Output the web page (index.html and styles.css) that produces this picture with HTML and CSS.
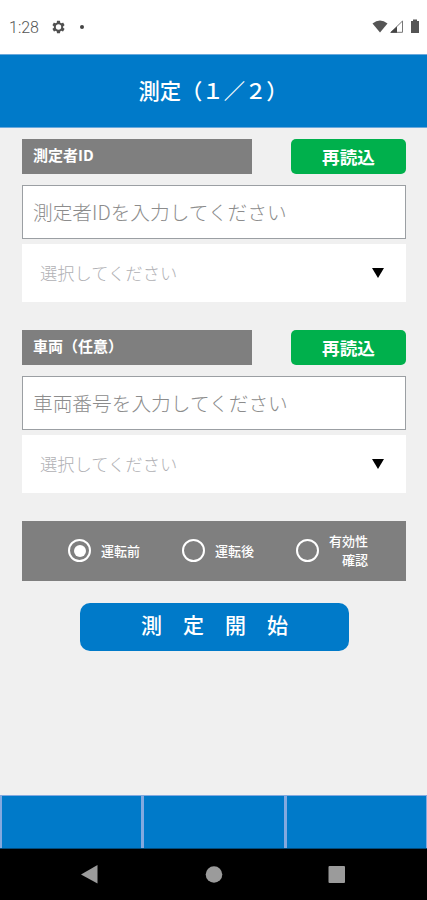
FILE: index.html
```
<!DOCTYPE html>
<html lang="ja">
<head>
<meta charset="utf-8">
<title>測定</title>
<link rel="stylesheet" href="styles.css">
</head>
<body>
<div class="status">
  <span class="clock">1:28</span>
  <svg class="gear" viewBox="0 0 24 24"><path fill="#505050" fill-rule="evenodd" d="M19.4 13a7.500 7.500 0 0 0 0-2l2.100-1.700a.5.5 0 0 0 .1-.6l-2-3.500a.5.5 0 0 0-.6-.2l-2.500 1a7.300 7.300 0 0 0-1.700-1L14.400 2.400a.5.5 0 0 0-.5-.4h-4a.5.5 0 0 0-.4.4L9.200 5a7.700 7.700 0 0 0-1.700 1L5 5a.5.5 0 0 0-.6.200l-2 3.500a.5.5 0 0 0 .1.600L4.700 11a8 8 0 0 0 0 2l-2.200 1.700a.5.5 0 0 0-.1.600l2 3.500c.1.200.4.300.6.200l2.500-1c.5.400 1.100.7 1.700 1l.3 2.600c0 .2.200.4.400.4h4c.3 0 .5-.2.500-.4l.4-2.600c.6-.3 1.200-.6 1.700-1l2.500 1c.2.100.5 0 .6-.2l2-3.500a.5.500 0 0 0-.1-.6zM12 16.300a4.300 4.300 0 1 1 0-8.600 4.300 4.300 0 0 1 0 8.600z"/></svg>
  <span class="dot"></span>
  <svg class="signals" viewBox="0 0 50 16">
    <path fill="#555" d="M1.500 4.500Q9-1.500 16.500 4.500L9 13.500z"/>
    <path fill="none" stroke="#777" d="M20 13.300 31.500 2v11.300z"/>
    <path fill="#444" d="M19 13.800 26 7.500v6.300z"/>
    <path fill="#555" d="M40 2h2V.5h4V2h2v12h-8z"/>
  </svg>
</div>
<header class="title">測定（１／２）</header>
<main class="content">
  <section class="group">
    <div class="heading"><div class="label">測定者ID</div><button class="reload">再読込</button></div>
    <div class="field">測定者IDを入力してください</div>
    <div class="select"><span>選択してください</span><i class="arrow"></i></div>
  </section>
  <section class="group">
    <div class="heading"><div class="label">車両（任意）</div><button class="reload">再読込</button></div>
    <div class="field">車両番号を入力してください</div>
    <div class="select"><span>選択してください</span><i class="arrow"></i></div>
  </section>
  <div class="modes">
    <div class="mode"><i class="radio checked"></i><span>運転前</span></div>
    <div class="mode"><i class="radio"></i><span>運転後</span></div>
    <div class="mode"><i class="radio"></i><span class="two-line">有効性<br>確認</span></div>
  </div>
  <button class="start">測　定　開　始</button>
</main>
<footer class="tabs"><div></div><div></div><div></div></footer>
<nav class="system">
  <svg viewBox="0 0 427 51"><g fill="#9b9b9b"><path d="M81 25.500 97.500 16v18.500z"/><circle cx="214" cy="25.500" r="8.300"/><rect x="328.500" y="17" width="16.500" height="17" rx="1"/></g></svg>
</nav>
</body>
</html>
```
FILE: styles.css
```
* { box-sizing: border-box; }
body {
  margin: 0;
  width: 427px;
  height: 900px;
  overflow: hidden;
  display: flex;
  flex-direction: column;
  background: #f0f0f0;
  font-family: "Noto Sans CJK JP", sans-serif;
}
button { border: 0; padding: 0; font-family: inherit; color: #fff; }
.status {
  height: 54px;
  background: #fff;
  display: flex;
  align-items: center;
  padding: 0 6px 0 9px;
  flex: none;
}
.clock { font: 300 16px/20px Roboto, sans-serif; color: #555; width: 42px; padding-top: 2px; }
.gear { width: 15px; height: 16px; }
.dot { width: 4px; height: 4px; border-radius: 50%; background: #444; margin-left: 14px; }
.signals { width: 50px; height: 16px; margin-left: auto; }
.title {
  height: 74px;
  flex: none;
  background: #007ac9;
  border-top: 1px solid #6ba9dc;
  border-bottom: 1px solid #6ba9dc;
  color: #fff;
  font-size: 21.300px;
  font-weight: 500;
  line-height: 70px;
  text-align: center;
  text-indent: -1px;
}
.content { flex: 1; padding: 11px 21px 0 22px; }
.group { height: 191px; }
.group + .modes { margin-top: -0.500px; }
.heading { display: flex; justify-content: space-between; height: 35px; }
.label {
  width: 230px;
  background: #7f7f7f;
  color: #fff;
  font-size: 15px;
  font-weight: 700;
  line-height: 32px;
  padding-left: 11px;
}
.reload {
  width: 115px;
  border-radius: 5px;
  background: #00b04c;
  font-size: 17.600px;
  font-weight: 700;
  line-height: 36px;
}
.field {
  margin-top: 11px;
  height: 54px;
  border: 1px solid #9b9fa3;
  background: #fff;
  color: #8c8c8c;
  font-size: 19.700px;
  font-weight: 300;
  line-height: 52px;
  padding-left: 10px;
}
.select {
  margin-top: 5px;
  height: 58px;
  background: #fff;
  display: flex;
  align-items: center;
  justify-content: space-between;
  padding: 0 22px 0 18px;
  color: #b0b0b4;
  font-size: 17.300px;
  font-weight: 300;
}
.select span { padding-bottom: 2px; }
.arrow { border: 6px solid transparent; border-top: 10px solid #000; border-bottom: 0; }
.modes {
  height: 60px;
  background: #7f7f7f;
  color: #fff;
  display: grid;
  grid-template-columns: repeat(3, 114px);
  padding-left: 46px;
  font-size: 13px;
  font-weight: 500;
  line-height: 19px;
}
.mode { display: flex; align-items: center; gap: 10px; }
.mode span { padding-bottom: 1px; }
.two-line { text-align: right; }
.radio {
  width: 23px;
  height: 23px;
  flex: none;
  border: 2px solid #fff;
  border-radius: 50%;
  display: grid;
  place-items: center;
}
.checked::after { content: ""; width: 12px; height: 12px; border-radius: 50%; background: #fff; }
.start {
  display: block;
  width: 269px;
  height: 48px;
  margin: 22px 0 0 58px;
  padding-bottom: 5px;
  border-radius: 10px;
  background: #007ac9;
  font-size: 21px;
  font-weight: 500;
  line-height: 43px;
}
.tabs {
  height: 54px;
  flex: none;
  display: grid;
  grid-template-columns: repeat(3, 1fr);
  column-gap: 3px;
  padding: 1px 1px 0 2px;
  background: #83a9df;
  border-bottom: 1px solid #004a7c;
}
.tabs div { background: #007ac9; }
.system { height: 51px; flex: none; background: #000; }
.system svg { display: block; width: 427px; height: 51px; }
```
